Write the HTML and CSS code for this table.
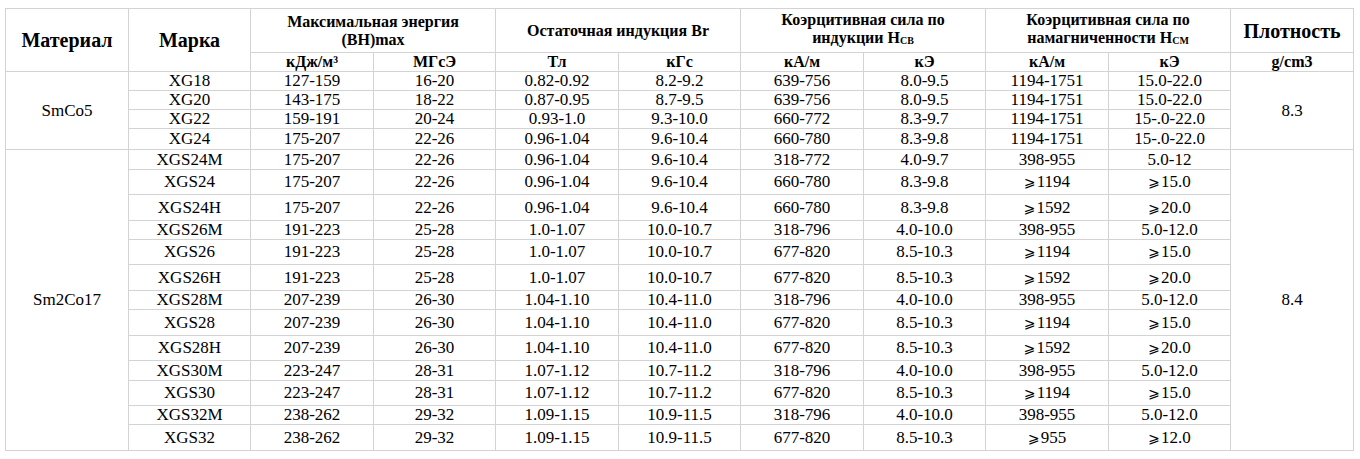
FILE: index.html
```html
<!DOCTYPE html>
<html lang="ru">
<head>
<meta charset="utf-8">
<title>Самарий-кобальтовые магниты</title>
<link rel="stylesheet" href="styles.css">
</head>
<body>
<table class="spec">
  <colgroup>
    <col class="c123"><col class="c122"><col class="c123"><col class="c122"><col class="c123"><col class="c122">
    <col class="c123"><col class="c122"><col class="c123"><col class="c122"><col class="c123">
  </colgroup>
  <thead>
    <tr class="h1">
      <th rowspan="2" class="big">Материал</th>
      <th rowspan="2" class="big">Марка</th>
      <th colspan="2">Максимальная энергия<br>(BH)max</th>
      <th colspan="2">Остаточная индукция Br</th>
      <th colspan="2">Коэрцитивная сила по<br>индукции H<span class="sub">СВ</span></th>
      <th colspan="2">Коэрцитивная сила по<br>намагниченности H<span class="sub">СМ</span></th>
      <th class="big">Плотность</th>
    </tr>
    <tr class="h2">
      <th>кДж/м³</th><th>МГсЭ</th>
      <th>Тл</th><th>кГс</th>
      <th>кА/м</th><th>кЭ</th>
      <th>кА/м</th><th>кЭ</th>
      <th>g/cm3</th>
    </tr>
  </thead>
  <tbody>
    <tr class="r19"><td rowspan="4">SmCo5</td><td>XG18</td><td>127-159</td><td>16-20</td><td>0.82-0.92</td><td>8.2-9.2</td><td>639-756</td><td>8.0-9.5</td><td>1194-1751</td><td>15.0-22.0</td><td rowspan="4">8.3</td></tr>
    <tr class="r19"><td>XG20</td><td>143-175</td><td>18-22</td><td>0.87-0.95</td><td>8.7-9.5</td><td>639-756</td><td>8.0-9.5</td><td>1194-1751</td><td>15.0-22.0</td></tr>
    <tr class="r19"><td>XG22</td><td>159-191</td><td>20-24</td><td>0.93-1.0</td><td>9.3-10.0</td><td>660-772</td><td>8.3-9.7</td><td>1194-1751</td><td>15-.0-22.0</td></tr>
    <tr class="r21"><td>XG24</td><td>175-207</td><td>22-26</td><td>0.96-1.04</td><td>9.6-10.4</td><td>660-780</td><td>8.3-9.8</td><td>1194-1751</td><td>15-.0-22.0</td></tr>

    <tr class="r20"><td rowspan="13">Sm2Co17</td><td>XGS24M</td><td>175-207</td><td>22-26</td><td>0.96-1.04</td><td>9.6-10.4</td><td>318-772</td><td>4.0-9.7</td><td>398-955</td><td>5.0-12</td><td rowspan="13">8.4</td></tr>
    <tr class="r25"><td>XGS24</td><td>175-207</td><td>22-26</td><td>0.96-1.04</td><td>9.6-10.4</td><td>660-780</td><td>8.3-9.8</td><td><span class="ge">⩾</span>1194</td><td><span class="ge">⩾</span>15.0</td></tr>
    <tr class="r26"><td>XGS24H</td><td>175-207</td><td>22-26</td><td>0.96-1.04</td><td>9.6-10.4</td><td>660-780</td><td>8.3-9.8</td><td><span class="ge">⩾</span>1592</td><td><span class="ge">⩾</span>20.0</td></tr>
    <tr class="r19"><td>XGS26M</td><td>191-223</td><td>25-28</td><td>1.0-1.07</td><td>10.0-10.7</td><td>318-796</td><td>4.0-10.0</td><td>398-955</td><td>5.0-12.0</td></tr>
    <tr class="r25"><td>XGS26</td><td>191-223</td><td>25-28</td><td>1.0-1.07</td><td>10.0-10.7</td><td>677-820</td><td>8.5-10.3</td><td><span class="ge">⩾</span>1194</td><td><span class="ge">⩾</span>15.0</td></tr>
    <tr class="r26"><td>XGS26H</td><td>191-223</td><td>25-28</td><td>1.0-1.07</td><td>10.0-10.7</td><td>677-820</td><td>8.5-10.3</td><td><span class="ge">⩾</span>1592</td><td><span class="ge">⩾</span>20.0</td></tr>
    <tr class="r19"><td>XGS28M</td><td>207-239</td><td>26-30</td><td>1.04-1.10</td><td>10.4-11.0</td><td>318-796</td><td>4.0-10.0</td><td>398-955</td><td>5.0-12.0</td></tr>
    <tr class="r26"><td>XGS28</td><td>207-239</td><td>26-30</td><td>1.04-1.10</td><td>10.4-11.0</td><td>677-820</td><td>8.5-10.3</td><td><span class="ge">⩾</span>1194</td><td><span class="ge">⩾</span>15.0</td></tr>
    <tr class="r25"><td>XGS28H</td><td>207-239</td><td>26-30</td><td>1.04-1.10</td><td>10.4-11.0</td><td>677-820</td><td>8.5-10.3</td><td><span class="ge">⩾</span>1592</td><td><span class="ge">⩾</span>20.0</td></tr>
    <tr class="r20"><td>XGS30M</td><td>223-247</td><td>28-31</td><td>1.07-1.12</td><td>10.7-11.2</td><td>318-796</td><td>4.0-10.0</td><td>398-955</td><td>5.0-12.0</td></tr>
    <tr class="r25"><td>XGS30</td><td>223-247</td><td>28-31</td><td>1.07-1.12</td><td>10.7-11.2</td><td>677-820</td><td>8.5-10.3</td><td><span class="ge">⩾</span>1194</td><td><span class="ge">⩾</span>15.0</td></tr>
    <tr class="r19"><td>XGS32M</td><td>238-262</td><td>29-32</td><td>1.09-1.15</td><td>10.9-11.5</td><td>318-796</td><td>4.0-10.0</td><td>398-955</td><td>5.0-12.0</td></tr>
    <tr class="r26"><td>XGS32</td><td>238-262</td><td>29-32</td><td>1.09-1.15</td><td>10.9-11.5</td><td>677-820</td><td>8.5-10.3</td><td><span class="ge">⩾</span>955</td><td><span class="ge">⩾</span>12.0</td></tr>
  </tbody>
</table>
</body>
</html>
```

FILE: styles.css
```css
html, body {
  margin: 0;
  padding: 0;
  background: #ffffff;
}

body {
  padding: 8px 0 0 5px;
  font-family: "Liberation Serif", "Times New Roman", "DejaVu Serif", serif;
  color: #000000;
}

.spec {
  border-collapse: collapse;
  table-layout: fixed;
  width: 1348px;
}

.c123 { width: 123px; }
.c122 { width: 122px; }

.spec th,
.spec td {
  border: 1px solid #d3d3d3;
  padding: 0;
  text-align: center;
  vertical-align: middle;
  white-space: nowrap;
  overflow: hidden;
}

.spec th {
  font-weight: bold;
  font-size: 16px;
  line-height: 18px;
}

.spec th.big {
  font-size: 20px;
}

.spec td {
  font-size: 17px;
  line-height: 18px;
}

.sub {
  font-size: 10px;
  vertical-align: -1px;
}

.ge {
  font-family: "DejaVu Sans", sans-serif;
  font-size: 14px;
  margin-right: 1px;
}

.h1 { height: 44px; }
.h2 { height: 19px; }
.r19 { height: 19px; }
.r20 { height: 20px; }
.r21 { height: 21px; }
.r25 { height: 25px; }
.r26 { height: 26px; }
```
